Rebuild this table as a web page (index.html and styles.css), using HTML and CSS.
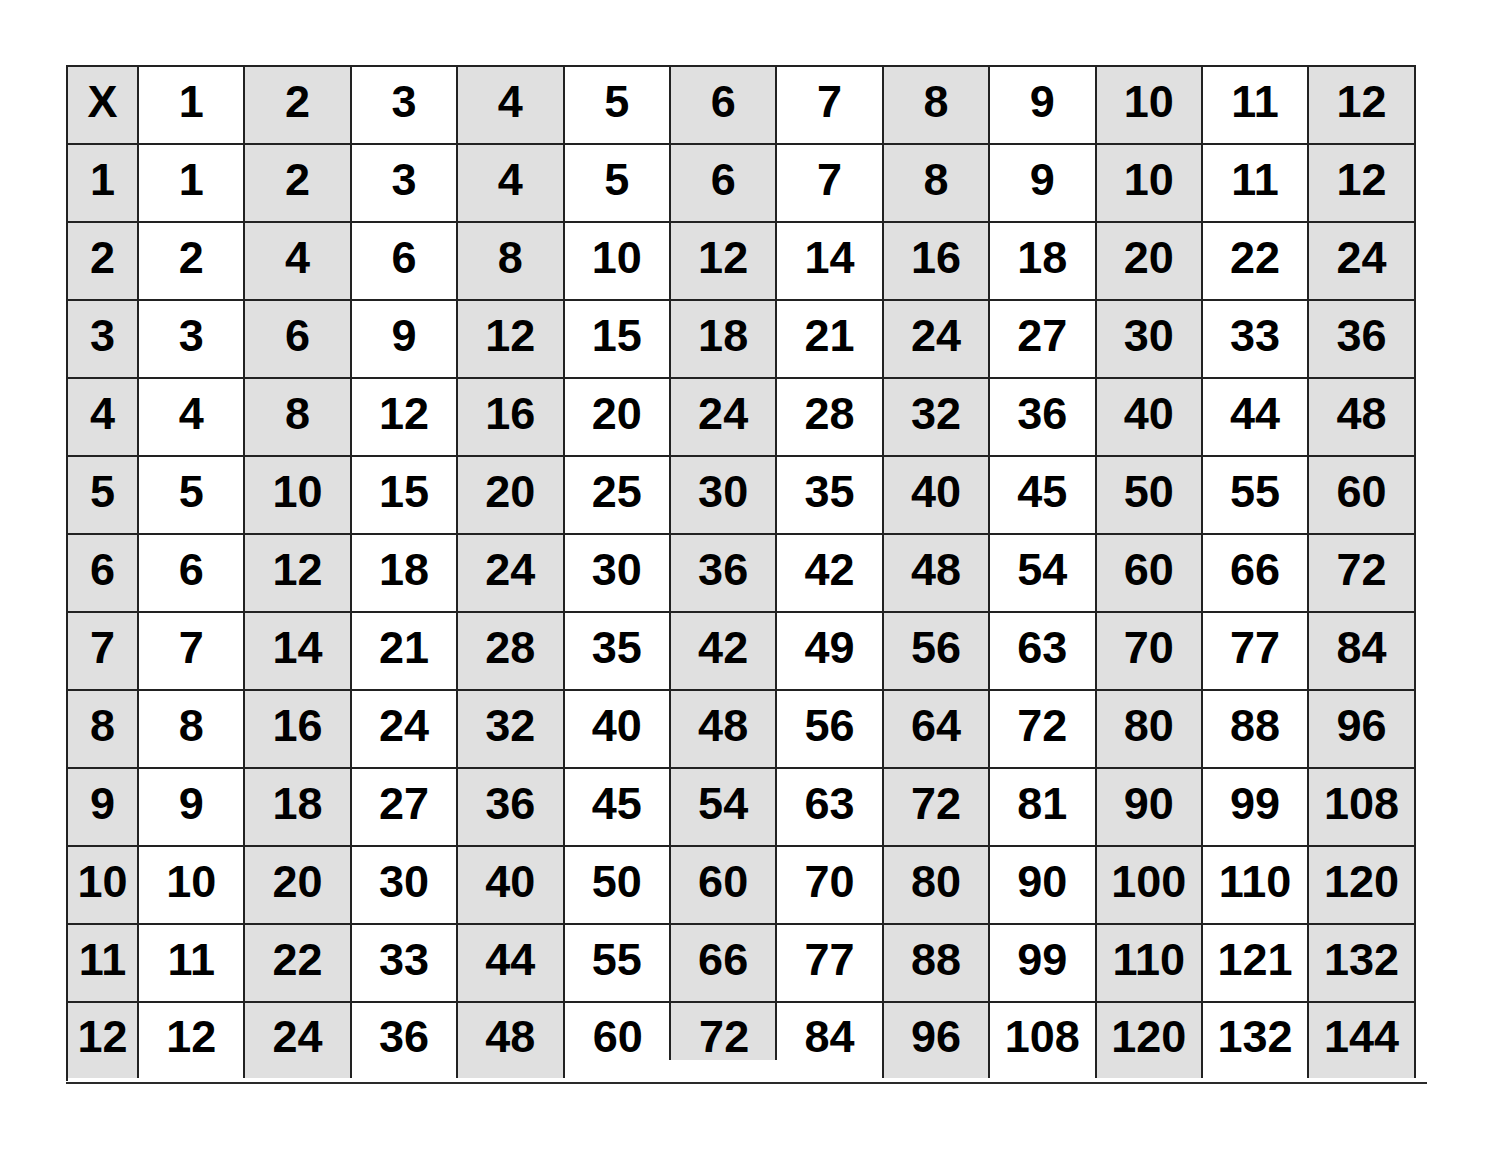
FILE: index.html
```html
<!DOCTYPE html>
<html>
<head>
<meta charset="utf-8">
<link rel="stylesheet" href="styles.css">
</head>
<body>
<div class="sheet">
  <div class="grid" id="grid"></div>
  <div class="baseline"></div>
</div>
<script>
  var g = document.getElementById('grid');
  for (var r = 0; r <= 12; r++) {
    for (var c = 0; c <= 12; c++) {
      var d = document.createElement('div');
      var cls = 'cell';
      if (c % 2 === 0) cls += ' shade';
      if (r === 12) cls += ' last';
      if (r === 12 && c === 5) cls += ' precut';
      if (r === 12 && c === 6) cls += ' cut';
      d.className = cls;
      var t;
      if (r === 0 && c === 0) t = 'X';
      else if (r === 0) t = c;
      else if (c === 0) t = r;
      else t = r * c;
      d.textContent = t;
      g.appendChild(d);
    }
  }
</script>
</body>
</html>
```
FILE: styles.css
```css
html, body {
  margin: 0;
  padding: 0;
  background: #ffffff;
}
.sheet {
  padding: 65px 0 0 66px;
  width: 1362px;
}
.grid {
  display: grid;
  grid-template-columns: 71px repeat(12, 106.4px);
  grid-auto-rows: 78px;
  border-top: 2px solid #222222;
  border-left: 2px solid #222222;
  width: max-content;
}
.cell {
  border-right: 2px solid #222222;
  border-bottom: 2px solid #222222;
  background: #ffffff;
  color: #000;
  font-family: "Liberation Sans", Arial, sans-serif;
  font-weight: bold;
  font-size: 45px;
  display: flex;
  align-items: center;
  justify-content: center;
  padding-bottom: 7px;
  box-sizing: border-box;
}
.cell.shade {
  background: #e0e0e0;
}
.cell.last {
  border-bottom: none;
  height: 75px;
}
.cell.precut {
  border-right: none;
  background: linear-gradient(#222222, #222222) right top / 2px 57px no-repeat, #ffffff;
}
.cell.cut {
  border-right: none;
  background:
    linear-gradient(#222222, #222222) right top / 2px 57px no-repeat,
    linear-gradient(to bottom, #e0e0e0 0, #e0e0e0 57px, #ffffff 57px);
}
.baseline {
  margin-top: 1px;
  height: 2px;
  width: 1361px;
  background: #2a2a2a;
}
```
